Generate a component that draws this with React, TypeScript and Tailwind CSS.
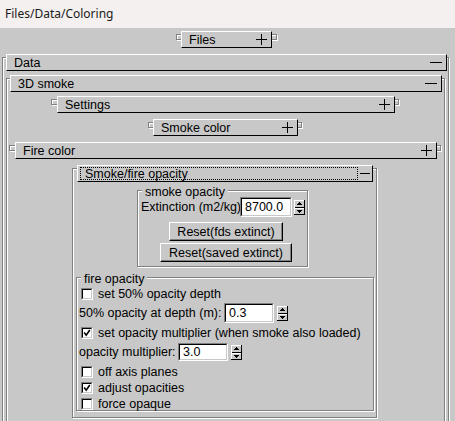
import React from "react";

const etched = "border border-[#808080] shadow-[inset_1px_1px_0_#fff,1px_1px_0_#fff]";
const raised = "border border-t-white border-l-white border-r-black border-b-black bg-[#c8c8c8]";

function Plus() {
  return (
    <svg width="11" height="11" viewBox="0 0 11 11" shapeRendering="crispEdges">
      <rect x="0" y="5" width="11" height="1" fill="#000" />
      <rect x="5" y="0" width="1" height="11" fill="#000" />
    </svg>
  );
}

function Minus() {
  return (
    <svg width="12" height="11" viewBox="0 0 12 11" shapeRendering="crispEdges">
      <rect x="0" y="5" width="12" height="1" fill="#000" />
    </svg>
  );
}

function Collapsed({ label, frame, btn }: { label: string; frame: string; btn: string }) {
  return (
    <div className={`${etched} h-[6px] ${frame}`}>
      <div className={`${raised} -mt-[4px] h-[17px] flex items-center justify-between pl-[7px] pr-[4px] ${btn}`}>
        <span>{label}</span>
        <Plus />
      </div>
    </div>
  );
}

function OpenBtn({ label, className }: { label: string; className: string }) {
  return (
    <div className={`${raised} -mt-[4px] h-[17px] flex items-center justify-between pl-[7px] pr-[4px] ${className}`}>
      <span>{label}</span>
      <Minus />
    </div>
  );
}

function Spinner() {
  return (
    <svg width="11" height="15" viewBox="0 0 11 15" shapeRendering="crispEdges" className="shrink-0">
      <rect x="0" y="0" width="11" height="15" fill="#c8c8c8" />
      <rect x="0" y="0" width="11" height="1" fill="#fff" />
      <rect x="0" y="0" width="1" height="15" fill="#fff" />
      <rect x="10" y="0" width="1" height="15" fill="#000" />
      <rect x="0" y="14" width="11" height="1" fill="#000" />
      <rect x="1" y="7" width="9" height="1" fill="#000" />
      <rect x="1" y="8" width="9" height="1" fill="#fff" />
      <polygon points="5.5,2 8,5 3,5" fill="#000" />
      <polygon points="3,10 8,10 5.5,13" fill="#000" />
    </svg>
  );
}

function Field({ value, className }: { value: string; className: string }) {
  return (
    <div className={`border border-t-[#808080] border-l-[#808080] border-r-white border-b-white shrink-0 ${className}`}>
      <div className="h-full w-full border border-t-black border-l-black border-r-[#c8c8c8] border-b-[#c8c8c8] bg-white pl-[3px] flex items-center">
        {value}
      </div>
    </div>
  );
}

function Check({ checked }: { checked?: boolean }) {
  return (
    <div className="w-[12px] h-[12px] shrink-0 border border-t-[#808080] border-l-[#808080] border-r-white border-b-white">
      <div className="h-full w-full border border-t-black border-l-black border-r-[#c8c8c8] border-b-[#c8c8c8] bg-white">
        {checked && (
          <svg width="8" height="8" viewBox="0 0 8 8">
            <path d="M1.2 3.6 L3.2 6.2 L6.8 1" stroke="#000" strokeWidth="1.6" fill="none" />
          </svg>
        )}
      </div>
    </div>
  );
}

function CheckRow({ label, checked, className }: { label: string; checked?: boolean; className: string }) {
  return (
    <div className={`h-[12px] flex items-center gap-[5px] pl-[4px] ${className}`}>
      <Check checked={checked} />
      <span>{label}</span>
    </div>
  );
}

function PushBtn({ label, className }: { label: string; className: string }) {
  return (
    <div className={`${raised} shadow-[inset_-1px_-1px_0_#808080] h-[19px] flex items-center justify-center ${className}`}>
      {label}
    </div>
  );
}

export default function App() {
  return (
    <div className="h-[421px] w-[455px] overflow-hidden whitespace-nowrap bg-[#c8c8c8] font-['Liberation_Sans',Arial,sans-serif] text-[12.5px] leading-[14px] text-black">
      <div className="h-[28px] bg-[#f3f0ef] flex items-center pl-[5px] font-['Noto_Sans',sans-serif] text-[12px] text-[#1a1a1a]">
        Files/Data/Coloring
      </div>

      <Collapsed label="Files" frame="mt-[6px] ml-[176px] w-[101px]" btn="ml-[4px] w-[91px]" />

      <div className={`${etched} mt-[17px] ml-[2px] w-[447px] pb-[40px]`}>
        <OpenBtn label="Data" className="ml-[3px] w-[441px]" />

        <div className={`${etched} mt-[7px] ml-[3px] w-[439px] pb-[40px]`}>
          <OpenBtn label="3D smoke" className="ml-[3px] w-[432px]" />

          <Collapsed label="Settings" frame="mt-[7px] ml-[44px] w-[348px]" btn="ml-[5px] w-[338px]" />
          <Collapsed label="Smoke color" frame="mt-[17px] ml-[141px] w-[154px]" btn="ml-[4px] w-[145px]" />
          <Collapsed label="Fire color" frame="mt-[17px] ml-[2px] w-[432px]" btn="ml-[5px] w-[422px]" />

          <div className={`${etched} mt-[17px] ml-[65px] w-[305px] pb-[6px]`}>
            <div className={`${raised} -mt-[4px] ml-[4px] w-[296px] h-[17px] flex items-center pl-[2px]`}>
              <div className="w-[278px] h-[13px] border border-dotted border-black flex items-center pl-[4px]">
                Smoke/fire opacity
              </div>
              <div className="ml-[2px]">
                <svg width="10" height="11" viewBox="0 0 10 11" shapeRendering="crispEdges">
                  <rect x="0" y="5" width="10" height="1" fill="#000" />
                </svg>
              </div>
            </div>

            {/* smoke opacity */}
            <div className={`${etched} mt-[8px] ml-[64px] w-[171px] h-[77px] flex flex-col`}>
              <span className="-mt-[6px] ml-[4px] px-[3px] bg-[#c8c8c8] w-fit">smoke opacity</span>
              <div className="-mt-[2px] h-[20px] flex items-center pl-[3px]">
                <span className="w-[99px] shrink-0">Extinction (m2/kg)</span>
                <Field value="8700.0" className="w-[52px] h-[20px]" />
                <div className="ml-[2px]">
                  <Spinner />
                </div>
              </div>
              <PushBtn label="Reset(fds extinct)" className="mt-[5px] ml-[31px] w-[114px]" />
              <PushBtn label="Reset(saved extinct)" className="mt-[2px] ml-[22px] w-[132px]" />
            </div>

            {/* fire opacity */}
            <div className={`${etched} mt-[10px] ml-[3px] w-[298px] flex flex-col`}>
              <span className="-mt-[6px] ml-[4px] px-[3px] bg-[#c8c8c8] w-fit">fire opacity</span>
              <CheckRow label="set 50% opacity depth" className="mt-[2px]" />
              <div className="mt-[3px] h-[20px] flex items-center pl-[2px]">
                <span className="w-[145px] shrink-0">50% opacity at depth (m):</span>
                <Field value="0.3" className="w-[50px] h-[20px]" />
                <div className="ml-[3px]">
                  <Spinner />
                </div>
              </div>
              <CheckRow label="set opacity multiplier (when smoke also loaded)" checked className="mt-[4px]" />
              <div className="mt-[4px] h-[18px] flex items-center pl-[2px]">
                <span className="w-[99px] shrink-0">opacity multiplier:</span>
                <Field value="3.0" className="w-[50px] h-[18px]" />
                <div className="ml-[3px]">
                  <Spinner />
                </div>
              </div>
              <CheckRow label="off axis planes" className="mt-[5px]" />
              <CheckRow label="adjust opacities" checked className="mt-[4px]" />
              <CheckRow label="force opaque" className="mt-[4px]" />
            </div>
          </div>
        </div>
      </div>
    </div>
  );
}
